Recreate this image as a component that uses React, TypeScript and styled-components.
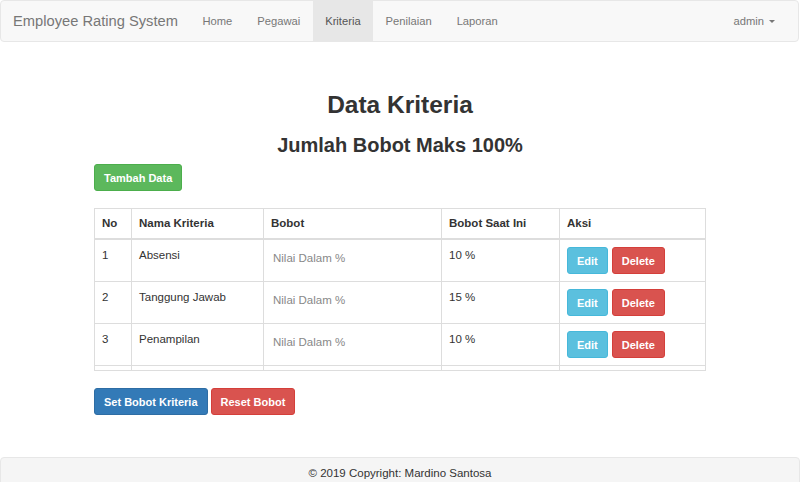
import * as React from "react";
import styled, { createGlobalStyle } from "styled-components";

const GlobalStyle = createGlobalStyle`
  * { box-sizing: border-box; }
  body {
    margin: 0;
    font-family: "Liberation Sans", Arial, sans-serif;
    font-size: 11.5px;
    line-height: 17px;
    color: #333;
    background: #fff;
  }
`;

const Navbar = styled.nav`
  display: flex;
  align-items: stretch;
  height: 42px;
  margin: 0 1px 0 0;
  background: #f8f8f8;
  border: 1px solid #e7e7e7;
  border-radius: 4px;
`;

const Brand = styled.a`
  display: flex;
  align-items: center;
  padding: 0 12px 0 12px;
  font-size: 14.7px;
  color: #777;
`;

const NavList = styled.ul`
  display: flex;
  list-style: none;
  margin: 0;
  padding: 0;
`;

const NavItem = styled.li<{ $active?: boolean }>`
  display: flex;
  align-items: center;
  padding: 0 12.5px;
  font-size: 11.2px;
  color: ${(p) => (p.$active ? "#555" : "#777")};
  background: ${(p) => (p.$active ? "#e7e7e7" : "transparent")};
`;

const UserMenu = styled.div`
  display: flex;
  align-items: center;
  margin-left: auto;
  padding: 0 23px 0 12px;
  font-size: 11.2px;
  color: #777;
`;

const Caret = styled.span`
  display: inline-block;
  width: 0;
  height: 0;
  margin-left: 5px;
  border-top: 3.5px solid #777;
  border-left: 3.5px solid transparent;
  border-right: 3.5px solid transparent;
`;

const Container = styled.main`
  width: 612px;
  margin: 0 auto;
`;

const Title = styled.h1`
  margin: 49px 0 16px;
  font-size: 24.5px;
  line-height: 27px;
  font-weight: 700;
  text-align: center;
`;

const SubTitle = styled.h2`
  margin: 0 0 8px;
  font-size: 20px;
  line-height: 22px;
  font-weight: 700;
  text-align: center;
`;

const Button = styled.button<{ $color: string; $border: string }>`
  display: inline-block;
  height: 27px;
  padding: 0 9px;
  font-family: inherit;
  font-size: 11px;
  font-weight: 700;
  color: #fff;
  background: ${(p) => p.$color};
  border: 1px solid ${(p) => p.$border};
  border-radius: 3px;
  cursor: pointer;
`;

const Toolbar = styled.div<{ $mb: number }>`
  display: flex;
  gap: 3px;
  margin-bottom: ${(p) => p.$mb}px;
`;

const Table = styled.table`
  width: 100%;
  border-collapse: collapse;
  border: 1px solid #ddd;
  margin-bottom: 17px;

  th,
  td {
    border: 1px solid #ddd;
    text-align: left;
    vertical-align: top;
  }
  th {
    padding: 6px 7px;
    border-bottom: 2px solid #ddd;
    font-weight: 700;
  }
  td {
    padding: 7px 7px 7px;
  }
`;

const SpacerCell = styled.td`
  && {
    height: 5px;
    padding: 0;
  }
`;

const WeightInput = styled.input`
  width: 100%;
  height: 19px;
  margin-top: 1px;
  padding: 0 2px;
  border: none;
  background: transparent;
  font-family: inherit;
  font-size: 11.5px;
  color: #333;
  outline: none;
  &::placeholder {
    color: #888;
  }
`;

const Actions = styled.div`
  display: flex;
  gap: 4px;
`;

const Footer = styled.footer`
  margin-top: 42px;
  height: 40px;
  padding-top: 7px;
  background: #f5f5f5;
  border: 1px solid #e7e7e7;
  border-radius: 4px;
  text-align: center;
  font-size: 11.5px;
  color: #333;
`;

const rows = [
  { no: 1, nama: "Absensi", bobot: "10 %" },
  { no: 2, nama: "Tanggung Jawab", bobot: "15 %" },
  { no: 3, nama: "Penampilan", bobot: "10 %" },
];

const App = () => {
  return (
    <React.Fragment>
      <GlobalStyle />
      <Navbar>
        <Brand>Employee Rating System</Brand>
        <NavList>
          <NavItem>Home</NavItem>
          <NavItem>Pegawai</NavItem>
          <NavItem $active>Kriteria</NavItem>
          <NavItem>Penilaian</NavItem>
          <NavItem>Laporan</NavItem>
        </NavList>
        <UserMenu>
          admin
          <Caret />
        </UserMenu>
      </Navbar>
      <Container>
        <Title>Data Kriteria</Title>
        <SubTitle>Jumlah Bobot Maks 100%</SubTitle>
        <Toolbar $mb={17}>
          <Button $color="#5cb85c" $border="#4cae4c">
            Tambah Data
          </Button>
        </Toolbar>
        <Table>
          <colgroup>
            <col style={{ width: 37 }} />
            <col style={{ width: 132 }} />
            <col style={{ width: 178 }} />
            <col style={{ width: 118 }} />
            <col />
          </colgroup>
          <thead>
            <tr>
              <th>No</th>
              <th>Nama Kriteria</th>
              <th>Bobot</th>
              <th>Bobot Saat Ini</th>
              <th>Aksi</th>
            </tr>
          </thead>
          <tbody>
            {rows.map((row) => (
              <tr key={row.no}>
                <td>{row.no}</td>
                <td>{row.nama}</td>
                <td>
                  <WeightInput placeholder="Nilai Dalam %" />
                </td>
                <td>{row.bobot}</td>
                <td>
                  <Actions>
                    <Button $color="#5bc0de" $border="#46b8da">
                      Edit
                    </Button>
                    <Button $color="#d9534f" $border="#d43f3a">
                      Delete
                    </Button>
                  </Actions>
                </td>
              </tr>
            ))}
            <tr>
              <SpacerCell />
              <SpacerCell />
              <SpacerCell />
              <SpacerCell />
              <SpacerCell />
            </tr>
          </tbody>
        </Table>
        <Toolbar $mb={0}>
          <Button $color="#337ab7" $border="#2e6da4">
            Set Bobot Kriteria
          </Button>
          <Button $color="#d9534f" $border="#d43f3a">
            Reset Bobot
          </Button>
        </Toolbar>
      </Container>
      <Footer>© 2019 Copyright: Mardino Santosa</Footer>
    </React.Fragment>
  );
};

export default App;
